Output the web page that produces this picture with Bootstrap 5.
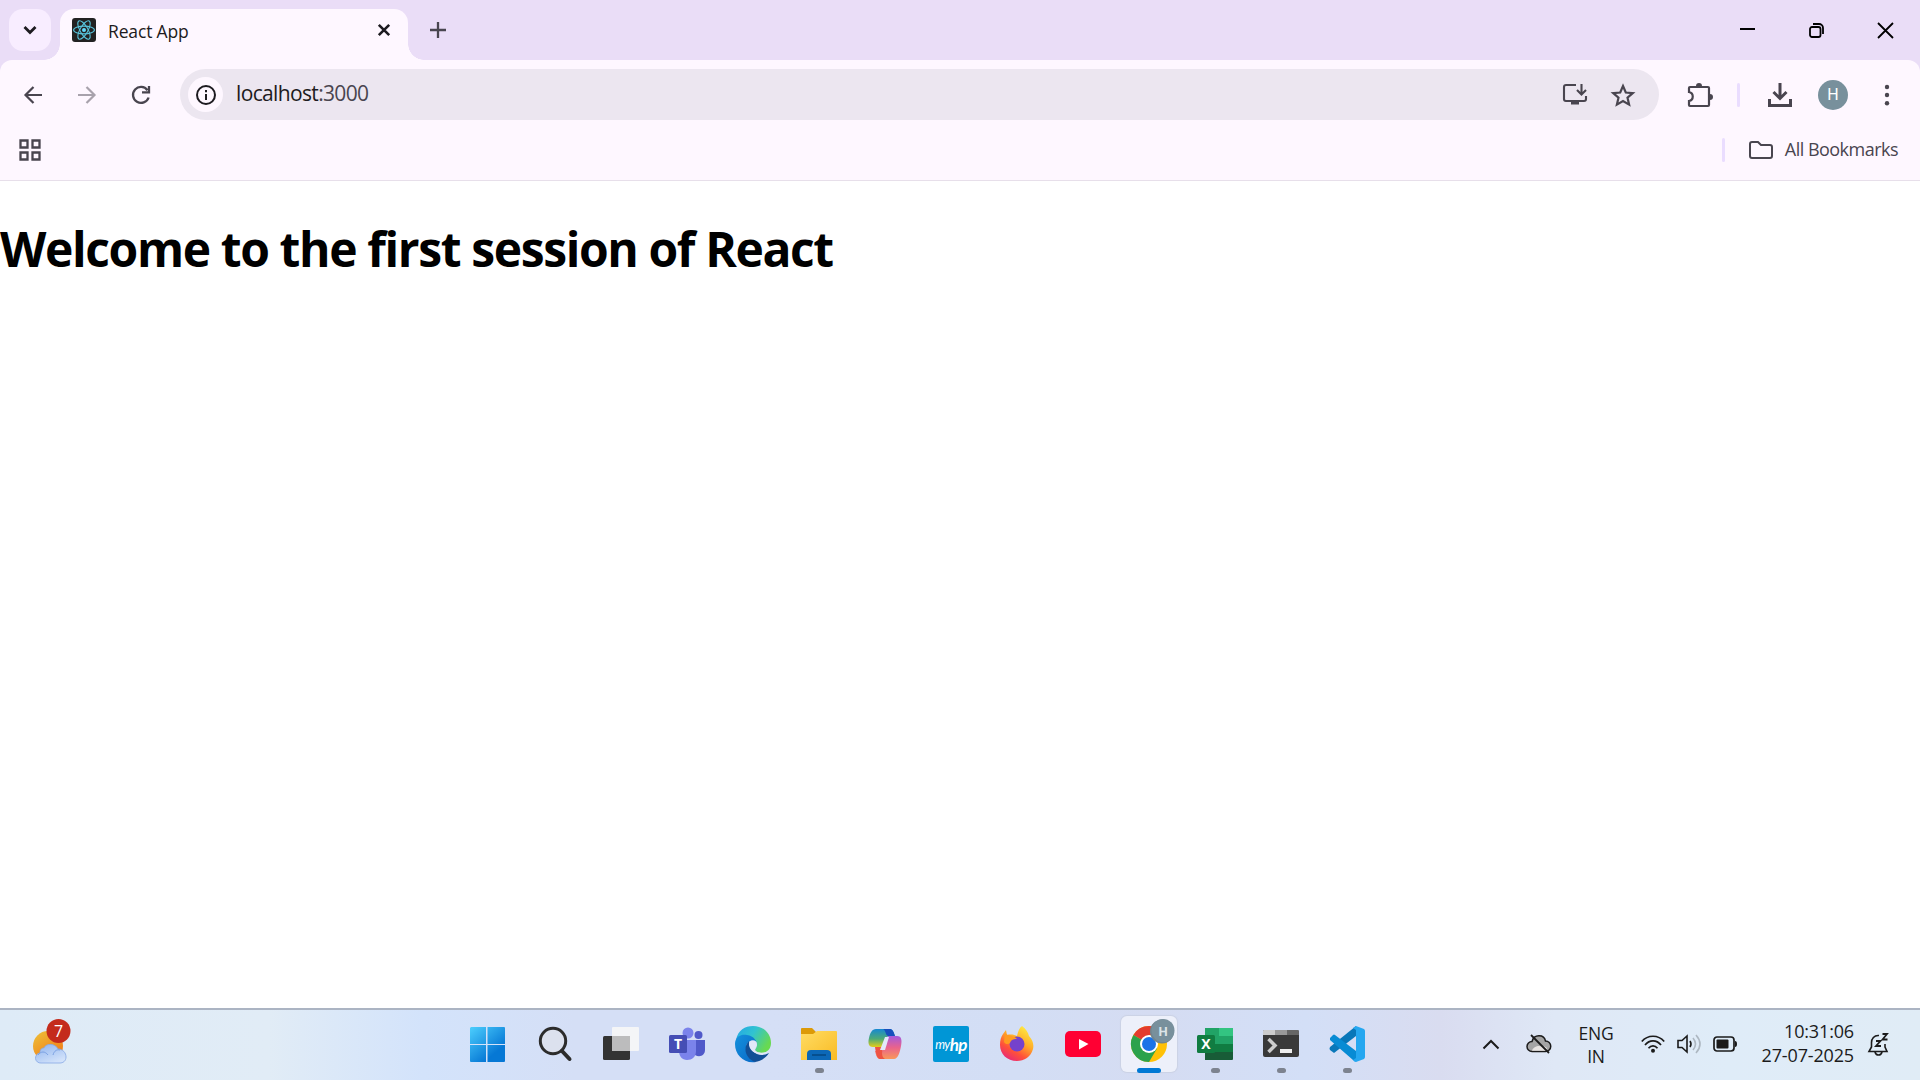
<!DOCTYPE html>
<html lang="en">
<head>
<meta charset="utf-8">
<meta name="viewport" content="width=device-width, initial-scale=1">
<title>React App</title>
<link href="https://cdn.jsdelivr.net/npm/bootstrap@5.3.0/dist/css/bootstrap.min.css" rel="stylesheet">
<style>
body{width:1920px;height:1080px;overflow:hidden;font-family:"Open Sans","Noto Sans",sans-serif;color:#1d1b20;line-height:1.2}
svg{display:block;flex:none;overflow:visible}
.tabstrip{height:60px;background:#eaddf7;padding-left:9px}
.tab-menu{width:42px;height:42px;border-radius:14px;background:#f8edff;margin-top:9px}
.tab-active{position:relative;width:348px;height:51px;margin:9px 0 0 9px;border-radius:14px 14px 0 0;background:#fef7ff;padding:0 18px 9px 12px}
.tab-active::before,.tab-active::after{content:"";position:absolute;bottom:0;width:16px;height:16px}
.tab-active::before{left:-16px;background:radial-gradient(circle at 0 0,transparent 15.5px,#fef7ff 16px)}
.tab-active::after{right:-16px;background:radial-gradient(circle at 100% 0,transparent 15.5px,#fef7ff 16px)}
.tab-title{font-size:17.5px;margin-left:12px;letter-spacing:-.15px;padding-top:3px}
.new-tab{margin:22px 0 0 22px}
.winbtn{width:69px;height:60px}
.chrome-bars{background:#eaddf7}
.chrome-inner{height:121px;border-radius:12px 12px 0 0;background:#fef7ff;border-bottom:1px solid #e7dfea}
.toolbar-row{height:69px;padding-top:1px}
.tool{width:54px;height:51px;padding-left:4px}
.omnibox{width:1479px;height:51px;border-radius:26px;background:#ece6f0;padding:0 24px 0 8px;margin:-1px 0 0 14px}
.site-info{width:35px;height:35px;background:#fef7ff}
.address{font-size:21px;margin-left:13px;letter-spacing:-.65px;padding-bottom:1px}
.address span{color:#49454f}
.star{margin-left:24px}
.puzzle{margin-left:29px}
.vsep{width:3px;height:24px;border-radius:2px;background:#eaddff}
.tool-sep{margin-left:25px}
.download{margin-left:28px}
.avatar{width:30px;height:30px;background:#78909c;color:#fff;font-size:16px;font-family:Roboto,sans-serif;margin-left:26px}
.kebab{margin-left:36px}
.bm-row{height:42px;padding:0 22px 0 19px;color:#49454f}
.bm-folder{margin-left:24px}
.bm-text{font-size:18px;letter-spacing:-.52px;margin-left:12px}
.page-area{height:827px;background:#fff}
.page-title{font-size:48px;font-weight:700;color:#000;line-height:64px;padding-top:36px;margin:0;letter-spacing:-1.38px;white-space:nowrap}
.taskbar{height:72px;border-top:2px solid #abb4c3;background:linear-gradient(90deg,#deebf7 0,#e1ecf6 14%,#d3e3fb 22%,#d5dff6 30%,#d5dff6 40%,#d3def5 53%,#d5dcf2 60%,#d3dff7 68%,#d9dcf0 75%,#dfe8f6 81%,#dfecf8 90%,#e0ecf6 100%)}
.weather{width:456px;padding:0 0 5px 32px}
.slot{position:relative;width:66px;height:70px;padding-bottom:2px}
.slot svg{width:36px;height:36px}
.slot .start-logo{margin-left:-4px}
.run-mark{position:absolute;bottom:7px;left:29px;width:9px;height:5px;border-radius:3px;background:#7d838f}
.run-active{left:21px;width:24px;background:#0078d4}
.tile{width:56px;height:56px;border-radius:6px;background:#edf0fa;box-shadow:0 0 1px 1px #cbd2e5}
.hp-logo{width:36px;height:36px;background:#0096d6;color:#fff;border-radius:2px;font:italic 12.500px Lato,sans-serif;letter-spacing:-.6px}
.hp-logo b{font-size:17px}
.tray-arrow{margin-left:102px}
.tray-cloud{margin-left:27px}
.tray-icon{margin-left:12px}
.wifi{margin-left:20px}
.lang,.clock{line-height:23.5px;color:#1b1b1b}
.clock{width:109px;font-size:18px;letter-spacing:-.15px;margin:-3px 14px 0 8px}
.lang{width:50px;font-size:17.5px;letter-spacing:-.2px;line-height:23px;margin:-1px 0 0 20px}
</style>
<script src="https://cdn.jsdelivr.net/npm/bootstrap@5.3.0/dist/js/bootstrap.bundle.min.js"></script>
</head>
<body class="d-flex flex-column m-0">
<header>
  <div class="tabstrip d-flex align-items-start">
    <div class="tab-menu d-flex align-items-center justify-content-center">
      <svg width="14" height="10" fill="none" stroke="#1d1b20" stroke-width="2.8"><path d="M1.500 2l5.500 5.500L12.500 2"/></svg>
    </div>
    <div class="tab-active d-flex align-items-center">
      <svg width="24" height="24" viewBox="0 0 24 24"><rect width="24" height="24" rx="3" fill="#222"/><g fill="none" stroke="#58c4dc" stroke-width="1.100"><ellipse cx="12" cy="12" rx="10.400" ry="3.900"/><ellipse cx="12" cy="12" rx="10.400" ry="3.900" transform="rotate(60 12 12)"/><ellipse cx="12" cy="12" rx="10.400" ry="3.900" transform="rotate(120 12 12)"/></g><circle cx="12" cy="12" r="2" fill="#61dafb"/></svg>
      <div class="tab-title">React App</div>
      <svg class="ms-auto" width="12" height="12" stroke="#1d1b20" stroke-width="2.600"><path d="M.8.8l10.400 10.400M11.200.8L.8 11.200"/></svg>
    </div>
    <svg class="new-tab" width="16" height="16" stroke="#49454f" stroke-width="2.300"><path d="M8 0v16M0 8h16"/></svg>
    <div class="ms-auto d-flex">
      <div class="winbtn d-flex align-items-center justify-content-center"><svg width="15" height="15" stroke="#000" stroke-width="2"><path d="M0 6h15"/></svg></div>
      <div class="winbtn d-flex align-items-center justify-content-center"><svg width="15" height="15" fill="none" stroke="#000" stroke-width="1.800"><rect x="1" y="4" width="10.500" height="10" rx="2"/><path d="M4 1h6a4 4 0 0 1 4 4v6"/></svg></div>
      <div class="winbtn d-flex align-items-center justify-content-center"><svg width="15" height="15" stroke="#000" stroke-width="1.800"><path d="M0 0l15 15M15 0L0 15"/></svg></div>
    </div>
  </div>
  <div class="chrome-bars"><div class="chrome-inner">
    <div class="toolbar-row d-flex align-items-center">
      <div class="tool d-flex align-items-center justify-content-center ms-1"><svg width="18" height="18" fill="none" stroke="#49454f" stroke-width="2.200"><path d="M18 9H2M9.500 1L1.500 9l8 8"/></svg></div>
      <div class="tool d-flex align-items-center justify-content-center"><svg width="18" height="18" fill="none" stroke="#a8a2ac" stroke-width="2.200"><path d="M0 9h16M8.500 1l8 8-8 8"/></svg></div>
      <div class="tool d-flex align-items-center justify-content-center"><svg width="18" height="18" fill="none" stroke="#49454f" stroke-width="2.300"><path d="M16.600 11.500A8 8 0 1 1 15.500 4.200M17 0v6.300h-7"/></svg></div>
      <div class="omnibox d-flex align-items-center">
        <div class="site-info rounded-circle d-flex align-items-center justify-content-center"><svg width="20" height="20" fill="none" stroke="#1d1b20" stroke-width="2"><circle cx="10" cy="10" r="9"/><path d="M10 9v6M10 5v2.200"/></svg></div>
        <div class="address">localhost<span>:3000</span></div>
        <svg class="ms-auto" width="24" height="21" fill="none" stroke="#49454f" stroke-width="2.100"><path d="M13 1H3Q1 1 1 3v12q0 2 2 2h18q2 0 2-2v-3M18.500 0v10M14 6l4.500 4.500L23 6"/><path d="M8 18.500h8" stroke-width="4"/></svg>
        <svg class="star" width="24" height="22" fill="none" stroke="#49454f" stroke-width="2.200"><path d="M12 2l2.800 6.500 7 .6-5.300 4.600 1.600 6.900L12 17l-6.100 3.600 1.600-6.900L2.200 9.100l7-.6z"/></svg>
      </div>
      <svg class="puzzle" width="24" height="24" viewBox="0 0 24 24" fill="none" stroke="#49454f" stroke-width="2.200"><path d="M2 4h18q1 0 1 1v17q0 1-1 1H2q-1 0-1-1v-4c5-1 5-8 0-9V5q0-1 1-1z"/><path d="M8 3a3 3 0 0 1 6 0zM22 11a3 3 0 0 1 0 6z" fill="#49454f" stroke="none"/></svg>
      <div class="vsep tool-sep"></div>
      <svg class="download" width="24" height="24" fill="none" stroke="#49454f" stroke-width="3"><path d="M12 0v14M5.500 9l6.500 6.500L18.500 9M1.500 16v6.500h21V16"/></svg>
      <div class="avatar rounded-circle d-flex align-items-center justify-content-center">H</div>
      <svg class="kebab" width="6" height="24" fill="#49454f"><circle cx="3" cy="4" r="2.200"/><circle cx="3" cy="12" r="2.200"/><circle cx="3" cy="20.300" r="2.200"/></svg>
    </div>
    <div class="bm-row d-flex align-items-center">
      <svg width="22" height="22" fill="none" stroke="#49454f" stroke-width="2.300"><path d="M1.500 1.500h7v7h-7zM13.500 1.500h7v7h-7zM1.500 13.500h7v7h-7zM13.500 13.500h7v7h-7z"/></svg>
      <div class="ms-auto d-flex align-items-center"><div class="vsep"></div>
      <svg class="bm-folder" width="24" height="18" fill="none" stroke="#49454f" stroke-width="2"><path d="M3 1h6l3 3h9q2 0 2 2v9q0 2-2 2H3q-2 0-2-2V3q0-2 2-2z"/></svg>
      <div class="bm-text">All Bookmarks</div></div>
    </div>
  </div></div>
</header>
<main class="page-area"><h1 class="page-title">Welcome to the first session of React</h1></main>
<footer class="taskbar d-flex align-items-center">
  <div class="weather"><svg width="42" height="46" viewBox="0 0 42 46">
    <defs><linearGradient id="sun" x2=".7" y2="1"><stop stop-color="#edc33b"/><stop offset="1" stop-color="#f17815"/></linearGradient><linearGradient id="cloud" x2=".6" y2="1"><stop stop-color="#8eb3ee"/><stop offset="1" stop-color="#d2e2fa"/></linearGradient></defs>
    <circle cx="16" cy="26" r="15" fill="url(#sun)"/><path d="M9 43a5 5 0 0 1-1-10c0-4 2-5 4-5 2-5 11-5 14 1 5 0 8 4 8 8 0 4-3 6-6 6z" fill="url(#cloud)" stroke="#85a7e5" stroke-width=".8"/><path d="M6 35c3-4 7-4 10 0M21 35c1-4 4-6 7-5" fill="none" stroke="#7ba1e3"/>
    <circle cx="26.500" cy="11" r="12" fill="#c42b1c"/><text x="26.500" y="16.500" text-anchor="middle" font-size="16" fill="#fff" font-family="Open Sans">7</text></svg></div>
  <div class="d-flex">
    <div class="slot d-flex align-items-center justify-content-center"><svg class="start-logo" viewBox="0 0 36 36"><defs><linearGradient id="win" gradientUnits="userSpaceOnUse" x2="30" y2="36"><stop stop-color="#4fd2ff"/><stop offset=".8" stop-color="#0678d5"/></linearGradient></defs><path fill="url(#win)" d="M2 1h15v17H1V2zM18.500 1H35q1 0 1 1v16H18.500zM1 19h16v17H2q-1 0-1-1zM18.500 19H36v16q0 1-1 1H18.500z"/></svg></div>
    <div class="slot d-flex align-items-center justify-content-center"><svg viewBox="0 0 36 36" fill="none" stroke="#2c2c2c"><circle cx="16" cy="15" r="12.700" fill="#dce1ee" stroke-width="3"/><path d="M25 25l7.500 8" stroke-width="4" stroke-linecap="round"/></svg></div>
    <div class="slot d-flex align-items-center justify-content-center"><svg viewBox="0 0 36 36"><rect y="10" width="27" height="24" rx="1.500" fill="#333"/><rect x="9" y="1" width="27" height="24" rx="1" fill="#f4f5f7"/><path d="M9 10h18v15H9z" fill="#bcbcbd"/></svg></div>
    <div class="slot d-flex align-items-center justify-content-center"><svg viewBox="0 0 36 36"><circle cx="29.500" cy="9" r="4" fill="#5059c9"/><path d="M25 14h11v10c0 5-5 8-10 5z" fill="#5059c9"/><circle cx="19" cy="7" r="5.500" fill="#7b83eb"/><path d="M10 14h17v11c0 6-4 9-9 9s-8-4-8-9z" fill="#7b83eb"/><rect y="9" width="18" height="18" rx="1.500" fill="#454eb5"/><text x="9" y="23" text-anchor="middle" font-family="Open Sans" font-weight="700" font-size="14" fill="#fff">T</text></svg></div>
    <div class="slot d-flex align-items-center justify-content-center"><svg viewBox="0 0 36 36"><defs><linearGradient id="edge1" x1="0" x2="1" y2=".5"><stop stop-color="#23a6e7"/><stop offset=".5" stop-color="#31c3d1"/><stop offset="1" stop-color="#68d951"/></linearGradient><linearGradient id="edge2" y2="1"><stop stop-color="#1591dc"/><stop offset="1" stop-color="#0868c7"/></linearGradient></defs><path d="M1 14C3 4 10 0 18 0c11 0 18 8 18 17 0 7-5 10-10 10-3 0-7-1-6-3 2-3 3-6 0-9C15 8 6 9 1 14z" fill="url(#edge1)"/><path d="M0 18C0 10 7 8 12 9c7 1 10 6 10 10-3-7-10-5-11 2-1 6 4 12 10 15C9 38 0 29 0 18z" fill="url(#edge2)"/><path d="M14 15c-7 7-3 18 6 21 6-1 11-4 14-9-9 5-20 0-20-12z" fill="#114f96"/><path d="M14 18c0-5 8-5 8 0 0 3-3 4-2 6 3 4 10 3 14 1-3 3-7 4-10 3-6-1-10-5-10-10z" fill="#e1e8f8"/></svg></div>
    <div class="slot d-flex align-items-center justify-content-center"><svg viewBox="0 0 36 36"><defs><linearGradient id="fold" x2="1" y2="1"><stop stop-color="#ffdc64"/><stop offset="1" stop-color="#f9bb23"/></linearGradient></defs><path d="M0 3q0-1 1-1h10l4 4h19v5H0z" fill="#dc9a08"/><path d="M0 8h12l4-3h19q1 0 1 1v28H0z" fill="url(#fold)"/><path d="M6 34v-6q0-4 4-4h16q4 0 4 4v6z" fill="#0c68b7"/><path d="M11 29h14" stroke="#064a85" stroke-width="1.600"/></svg><span class="run-mark"></span></div>
    <div class="slot d-flex align-items-center justify-content-center"><svg viewBox="0 0 36 36"><defs><linearGradient id="co1" y2="1" x2="0"><stop stop-color="#1688d2"/><stop offset=".55" stop-color="#4daa76"/><stop offset="1" stop-color="#e5ce18"/></linearGradient><linearGradient id="co2" y2="1" x2="0"><stop stop-color="#a45add"/><stop offset=".5" stop-color="#e9638c"/><stop offset="1" stop-color="#f9985a"/></linearGradient></defs><path d="M9 3h14c3 0 4 4 5 7h-5c-3 0-4 2-5 5l-2 6H6c-5 0-5-5-4-9C3 7 5 3 9 3z" fill="url(#co1)"/><path d="M16 3h7c3 0 4 4 5 7h-7c-3-1-2-6-5-7z" fill="#164fbd"/><path d="M27 33H13c-3 0-4-4-5-8h5c3 0 4-2 5-5l3-10h9c5 0 5 5 4 10-1 6-3 13-7 13z" fill="url(#co2)"/><path d="M8 21h8l-1 6c0 3 1 5 3 6h-5c-3 0-4-5-5-12z" fill="#ee5344"/><path d="M18 11h4l-4 13h-5z" fill="#e3e8f9"/></svg></div>
    <div class="slot d-flex align-items-center justify-content-center"><div class="hp-logo d-flex align-items-center justify-content-center">my<b>hp</b></div></div>
    <div class="slot d-flex align-items-center justify-content-center"><svg viewBox="0 0 36 36"><defs><linearGradient id="fx" x1=".8" x2=".2" y2="1"><stop stop-color="#fff044"/><stop offset=".4" stop-color="#ffad29"/><stop offset=".7" stop-color="#ff5139"/><stop offset="1" stop-color="#e52381"/></linearGradient></defs><path d="M23 0c4 3 6 6 7 10 4 4 5 9 4 13-2 8-9 12-16 12C8 35 1 28 1 19c0-5 1-8 3-11l3-4 1 5c4-1 8 0 10 1 1-4 2-8 5-10z" fill="url(#fx)"/><circle cx="18" cy="18" r="7.500" fill="#7542cc"/><path d="M6 7c2 3 9 2 12 6-2 0-6 0-7 4-2 2-5 1-6-1z" fill="#ff9b20"/></svg></div>
    <div class="slot d-flex align-items-center justify-content-center"><svg viewBox="0 0 36 36"><rect y="5" width="36" height="26" rx="5" fill="#ff0033"/><path d="M14 13l9.500 5-9.500 5.500z" fill="#fff"/></svg></div>
    <div class="slot d-flex align-items-center justify-content-center"><div class="tile d-flex align-items-center justify-content-center"><svg viewBox="0 0 36 36"><circle cx="18" cy="18" r="18" fill="#ffc107"/><path d="M18 18L2.400 9A18 18 0 0 1 33.600 9H18z" fill="#e33b2e"/><path d="M2.400 9A18 18 0 0 0 18 36l8-13.500-8-4.500z" fill="#2ba24c"/><circle cx="18" cy="18" r="9" fill="#fff"/><circle cx="18" cy="18" r="7" fill="#1a73e8"/><circle cx="31" cy="5.500" r="12" fill="#71858f"/><circle cx="32" cy="4.500" r="11.500" fill="#78909c"/><text x="32" y="9.500" text-anchor="middle" font-size="13" font-weight="700" fill="#dce4e8" font-family="Roboto">H</text></svg></div><span class="run-mark run-active"></span></div>
    <div class="slot d-flex align-items-center justify-content-center"><svg viewBox="0 0 36 36"><path d="M8 2h27q1 0 1 1v30q0 1-1 1H8z" fill="#185c37"/><path d="M8 2h14v24H8z" fill="#21a366"/><path d="M22 2h14v8H22z" fill="#33c481"/><path d="M8 18h14v8H8z" fill="#107c41"/><path d="M22 10h14v8H22z" fill="#21a366"/><path d="M22 18h14v8H22z" fill="#107c41"/><rect y="9" width="18" height="18" rx="1.500" fill="#107c41"/><text x="9" y="23" text-anchor="middle" font-family="Open Sans" font-weight="700" font-size="14" fill="#fff">X</text></svg><span class="run-mark"></span></div>
    <div class="slot d-flex align-items-center justify-content-center"><svg viewBox="0 0 36 36"><rect y="4" width="36" height="27" rx="2" fill="#393939"/><path d="M1 4h11v5H0V5z" fill="#ccc"/><path d="M12 4h12v5H12z" fill="#999"/><path d="M24 4h11l1 1v4H24z" fill="#666"/><path d="M5.500 13l6.500 6.500-6.500 6.500" fill="none" stroke="#ccc" stroke-width="3.500"/><path d="M17 23h12v4H17z" fill="#eee"/></svg><span class="run-mark"></span></div>
    <div class="slot d-flex align-items-center justify-content-center"><svg viewBox="0 0 36 36"><path d="M27 0v10L5 27l-4-3q-1-1 0-3z" fill="#0877b9"/><path d="M1 12l3-3q1-1 2 0l21 16v10.500L24 34 1 14z" fill="#078bd4"/><path d="M27 0l8 3q1 1 1 2v26q0 1-1 2l-8 3q-2 0-3-2l3-2V4l-3-2z" fill="#25a7f0"/></svg><span class="run-mark"></span></div>
  </div>
  <svg class="tray-arrow" width="18" height="11" fill="none" stroke="#1b1b1b" stroke-width="2"><path d="M1.500 8.500L9 1l7.500 7.500"/></svg>
  <svg class="tray-cloud" width="24" height="20" viewBox="0 0 24 20" stroke="#1b1b1b" stroke-width="1.500"><path d="M5 16.500a4.500 4.500 0 0 1 0-10C7-1 17-1 18.500 6a5 5 0 0 1 0 10.500z" fill="#a5a5a5"/><path d="M5 15.700c1-4 7-6 10-4 4-1 6 2 5 4z" fill="#e8e4e2" stroke="none"/><path d="M4 0l18 18" stroke-width="1.800"/></svg>
  <div class="lang text-center">ENG<br>IN</div>
  <svg class="wifi" width="24" height="18" fill="none" stroke="#1b1b1b" stroke-width="1.700"><path d="M.8 5.500c6-7 16.400-7 22.400 0M4 9c4.500-5.500 11.500-5.500 16 0M7.500 12.200c2.500-3.200 6.500-3.200 9 0"/><circle cx="12" cy="14.700" r="2" fill="#1b1b1b" stroke="none"/></svg>
  <svg class="tray-icon" width="24" height="20" fill="none" stroke="#1b1b1b" stroke-width="1.600"><path d="M1 5.500h4L10 1v16l-5-4.500H1zM13 6q2 3 0 6"/><path d="M16 3q5 6 0 12M19 0q8 9 0 18" stroke="#adb7c1"/></svg>
  <svg class="tray-icon" width="24" height="18"><rect x="1" y="1" width="20" height="14" rx="3" fill="none" stroke="#1b1b1b" stroke-width="1.700"/><rect x="3.500" y="3.500" width="12" height="9" rx="1" fill="#1b1b1b"/><path d="M22 5q2 0 2 3t-2 3z" fill="#1b1b1b"/></svg>
  <div class="clock text-end">10:31:06<br>27-07-2025</div>
  <svg width="22" height="24" viewBox="0 0 22 24" fill="none" stroke="#1b1b1b" stroke-width="1.600"><path d="M11 2.500C6 2 3.500 6 3.500 9.500V14L1 18.500h18L17 14v-3M7 19c1 4 6 4 7 0"/><path d="M8 8h4.500L8 13h5M14.500 1H19l-4.500 5.500h5" stroke-width="1.800"/></svg>
</footer>
</body>
</html>
